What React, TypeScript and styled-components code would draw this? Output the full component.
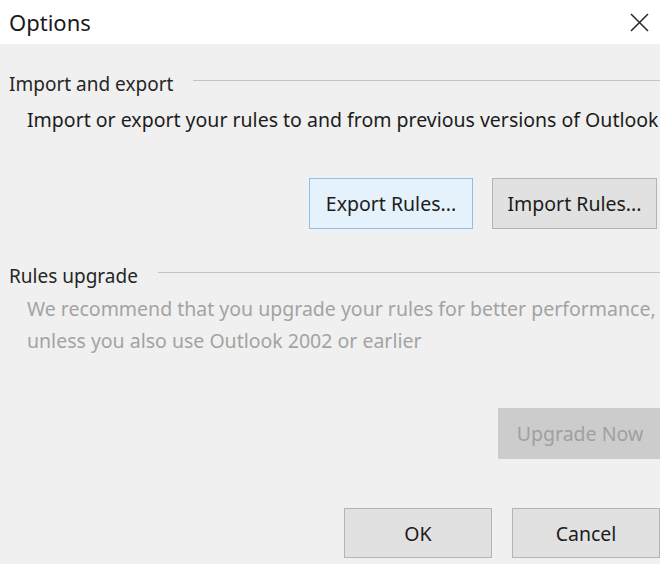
import React from 'react';
import styled, { createGlobalStyle } from 'styled-components';

const GlobalStyle = createGlobalStyle`
  html, body {
    margin: 0;
    padding: 0;
    background: #f0f0f0;
  }
  body {
    width: 660px;
    height: 564px;
    overflow: hidden;
    font-family: "Noto Sans", "Open Sans", sans-serif;
  }
`;

const Dialog = styled.div`
  display: flex;
  flex-direction: column;
  width: 660px;
  height: 564px;
  background: #f0f0f0;
  overflow: hidden;
`;

const TitleBar = styled.div`
  flex-shrink: 0;
  height: 44px;
  background: #ffffff;
  display: flex;
  align-items: center;
  justify-content: space-between;
  padding: 0 11px 0 9px;
`;

const Title = styled.div`
  font-size: 22px;
  color: #1a1a1a;
`;

const CloseButton = styled.button`
  border: none;
  background: transparent;
  padding: 0;
  width: 20px;
  height: 20px;
  display: flex;
  align-items: center;
  justify-content: center;
  color: #333;
`;

const Body = styled.div`
  display: flex;
  flex-direction: column;
  padding-left: 9px;
`;

const GroupHeader = styled.div<{ $top: number; $lineGap: number }>`
  display: flex;
  align-items: center;
  margin-top: ${p => p.$top}px;
  height: 26px;
  font-size: 19px;
  color: #262626;
  white-space: nowrap;

  &::after {
    content: '';
    flex: 1;
    height: 1px;
    background: #c4c4c4;
    margin: -7px 0 0 ${p => p.$lineGap}px;
  }
`;

const Description = styled.div<{ $muted?: boolean }>`
  margin: ${p => (p.$muted ? '4px' : '10px')} 0 0 18px;
  font-size: 19.5px;
  line-height: ${p => (p.$muted ? '32px' : '26px')};
  color: ${p => (p.$muted ? '#a3a3a3' : '#1c1c1c')};
  white-space: nowrap;
`;

const ButtonRow = styled.div<{ $top: number; $left: number; $gap?: number }>`
  display: flex;
  gap: ${p => p.$gap ?? 19}px;
  margin-top: ${p => p.$top}px;
  padding-left: ${p => p.$left}px;
`;

const Button = styled.button<{ $width: number; $height: number; $variant?: 'focus' | 'disabled' }>`
  flex-shrink: 0;
  width: ${p => p.$width}px;
  height: ${p => p.$height}px;
  font-family: inherit;
  font-size: 19.5px;
  border: 1px solid
    ${p => (p.$variant === 'focus' ? '#8cc0ec' : p.$variant === 'disabled' ? '#cccccc' : '#b4b4b4')};
  background: ${p => (p.$variant === 'focus' ? '#e5f1fb' : p.$variant === 'disabled' ? '#cccccc' : '#e1e1e1')};
  color: ${p => (p.$variant === 'disabled' ? '#a0a0a0' : '#1c1c1c')};
  padding: 0;
  white-space: nowrap;
`;

export default function App() {
  return (
    <>
      <GlobalStyle />
      <Dialog>
        <TitleBar>
          <Title>Options</Title>
          <CloseButton aria-label="Close">
            <svg width="19" height="19" viewBox="0 0 19 19">
              <path d="M1 1 L18 18 M18 1 L1 18" stroke="#2b2b2b" strokeWidth="1.6" fill="none" />
            </svg>
          </CloseButton>
        </TitleBar>
        <Body>
          <GroupHeader $top={27} $lineGap={20}>Import and export</GroupHeader>
          <Description>Import or export your rules to and from previous versions of Outlook</Description>
          <ButtonRow $top={45} $left={300}>
            <Button $width={164} $height={51} $variant="focus">Export Rules...</Button>
            <Button $width={165} $height={51}>Import Rules...</Button>
          </ButtonRow>
          <GroupHeader $top={34} $lineGap={20}>Rules upgrade</GroupHeader>
          <Description $muted>
            We recommend that you upgrade your rules for better performance,
            <br />
            unless you also use Outlook 2002 or earlier
          </Description>
          <ButtonRow $top={51} $left={489}>
            <Button $width={164} $height={51} $variant="disabled">Upgrade Now</Button>
          </ButtonRow>
          <ButtonRow $top={49} $left={335} $gap={20}>
            <Button $width={148} $height={50}>OK</Button>
            <Button $width={148} $height={50}>Cancel</Button>
          </ButtonRow>
        </Body>
      </Dialog>
    </>
  );
}
